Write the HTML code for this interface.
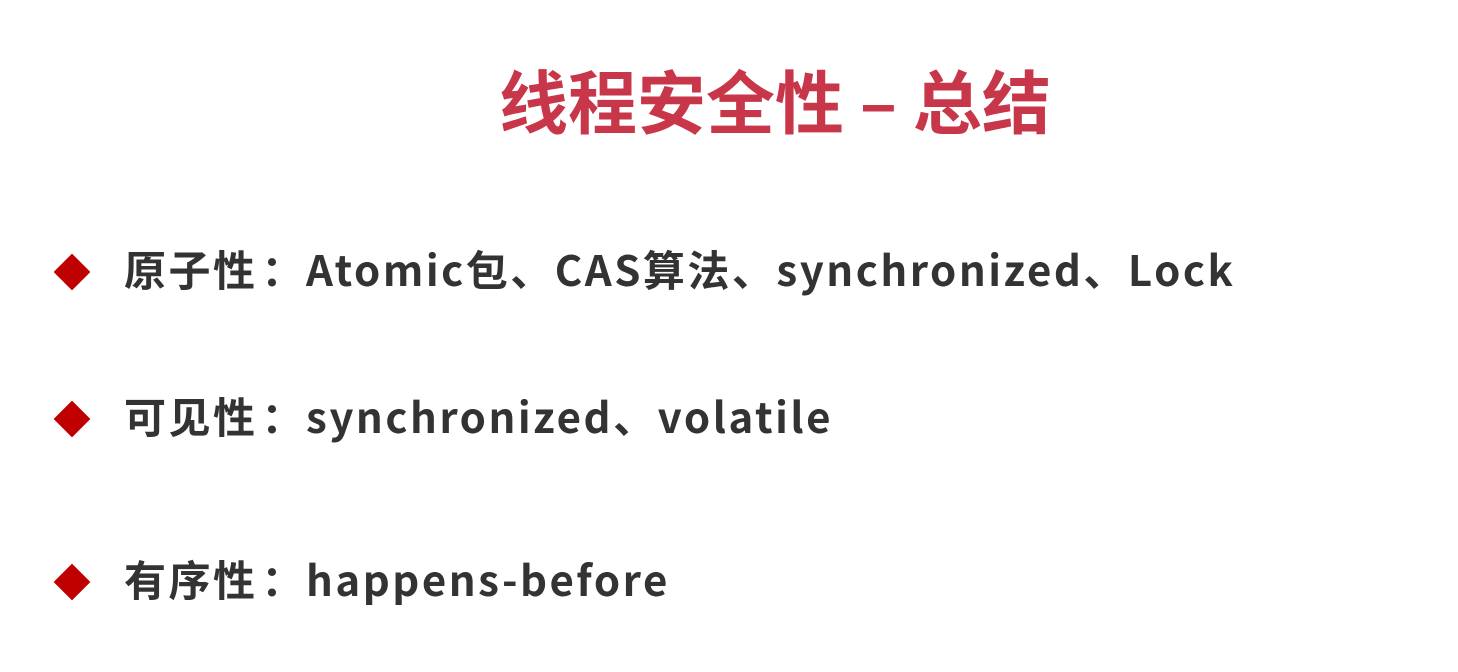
<!DOCTYPE html>
<html><head><meta charset="utf-8"><style>
html,body{margin:0;padding:0;width:1458px;height:672px;background:#fff;overflow:hidden}
body{position:relative;font-family:"Noto Sans CJK SC","Liberation Sans",sans-serif;}
.t{position:absolute;left:499px;top:57px;font-size:69px;font-weight:bold;color:#c8364a;white-space:nowrap;line-height:1.2;letter-spacing:0px}
.row{position:absolute;left:124px;font-size:42px;font-weight:bold;color:#333;white-space:nowrap;line-height:1.2;letter-spacing:2.5px}
.c{display:inline-block;margin:0 0 0 4px}
.d{position:absolute;width:26px;height:26px;background:#c00000;transform:rotate(45deg)}
</style></head><body>
<div class="t">线程安全性 – 总结</div>
<div class="d" style="left:59px;top:259px"></div>
<div class="row" style="top:244px">原子性<span class="c">：</span>Atomic包、CAS算法、synchronized、Lock</div>
<div class="d" style="left:59px;top:406px"></div>
<div class="row" style="top:391px">可见性<span class="c">：</span>synchronized、volatile</div>
<div class="d" style="left:59px;top:569px"></div>
<div class="row" style="top:554px">有序性<span class="c">：</span>happens-before</div>
</body></html>
